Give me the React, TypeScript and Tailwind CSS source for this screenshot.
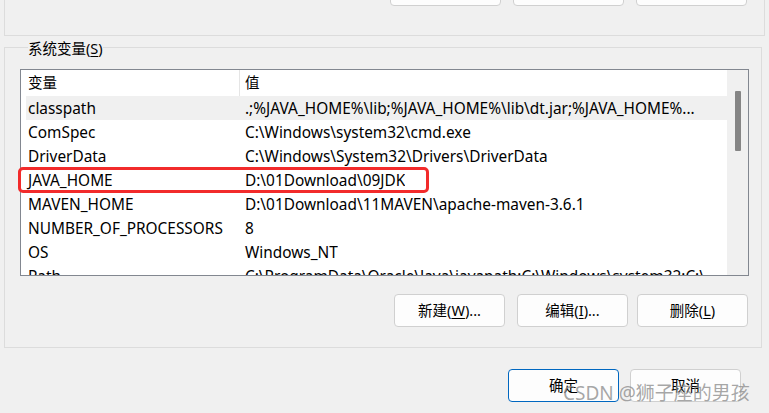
const rows: [string, string][] = [
  ["classpath", ".;%JAVA_HOME%\\lib;%JAVA_HOME%\\lib\\dt.jar;%JAVA_HOME%..."],
  ["ComSpec", "C:\\Windows\\system32\\cmd.exe"],
  ["DriverData", "C:\\Windows\\System32\\Drivers\\DriverData"],
  ["JAVA_HOME", "D:\\01Download\\09JDK"],
  ["MAVEN_HOME", "D:\\01Download\\11MAVEN\\apache-maven-3.6.1"],
  ["NUMBER_OF_PROCESSORS", "8"],
  ["OS", "Windows_NT"],
  ["Path", "C:\\ProgramData\\Oracle\\Java\\javapath;C:\\Windows\\system32;C:\\..."],
];

function WinButton({ children, primary }: { children?: React.ReactNode; primary?: boolean }) {
  return (
    <button
      className={
        primary
          ? "h-[33px] w-[111px] rounded-[4px] border border-[#0067c0] bg-[#fdfdfd] text-[14.5px] text-black"
          : "h-[33px] w-[111px] rounded-[4px] border border-[#d0d0d0] bg-[#fdfdfd] text-[14.5px] text-black"
      }
    >
      {children}
    </button>
  );
}

export default function App() {
  return (
    <div className="relative h-[413px] w-[769px] overflow-hidden bg-[#f0f0f0] font-['Noto_Sans','Noto_Sans_CJK_SC',sans-serif] text-[14.5px] text-black">
      {/* user variables group (cut off at top) */}
      <div className="mx-[4px] flex h-[36px] justify-end gap-[12px] border-x border-b border-[#dcdcdc] pr-[17px]">
        <div className="-mt-[27px] h-[33px] w-[111px] rounded-[4px] border border-[#d0d0d0] bg-[#fdfdfd]" />
        <div className="-mt-[27px] h-[33px] w-[111px] rounded-[4px] border border-[#d0d0d0] bg-[#fdfdfd]" />
        <div className="-mt-[27px] h-[33px] w-[111px] rounded-[4px] border border-[#d0d0d0] bg-[#fdfdfd]" />
      </div>

      <fieldset className="ml-[4px] mr-[7px] border border-[#dcdcdc] pb-[20px] pl-[15px] pr-[12px]">
        <legend className="ml-[8px] pt-[2px] leading-[20px]">
          系统变量(<span className="underline underline-offset-2">S</span>)
        </legend>

        <div className="relative mt-[11px] flex h-[207px] border border-[#828790] bg-white">
          <div className="flex-1 overflow-hidden pl-[5px]">
            <div className="flex h-[26px] items-center">
              <div className="w-[213px] pl-[2px]">变量</div>
              <div className="h-full border-l border-[#e5e5e5]" />
              <div className="pl-[5px]">值</div>
            </div>
            {rows.map(([name, value], i) => (
              <div
                key={name}
                className={
                  i === 0
                    ? "flex h-[24px] items-center bg-[#f0f0f0] pt-[1px] text-[15.4px]"
                    : "flex h-[24px] items-center pt-[1px] text-[15.4px]"
                }
              >
                <div className="w-[213px] shrink-0 whitespace-nowrap pl-[2px]">{name}</div>
                <div className="overflow-hidden whitespace-nowrap pl-[6px]">{value}</div>
              </div>
            ))}
          </div>
          <div className="flex w-[21px] shrink-0 justify-center bg-[#f0f0f0] pt-[21px]">
            <div className="h-[60px] w-[6px] rounded-[1px] bg-[#858585]" />
          </div>

          {/* annotation */}
          <div className="absolute left-[-3px] top-[97px] h-[26px] w-[411px] rounded-[5px] border-[3px] border-[#f22b2b]" />
        </div>

        <div className="mt-[18px] flex justify-end pr-[1px]">
          <WinButton>
            新建(<span className="underline underline-offset-2">W</span>)...
          </WinButton>
          <div className="w-[12px]" />
          <WinButton>
            编辑(<span className="underline underline-offset-2">I</span>)...
          </WinButton>
          <div className="w-[9px]" />
          <WinButton>
            删除(<span className="underline underline-offset-2">L</span>)
          </WinButton>
        </div>
      </fieldset>

      <div className="mt-[21px] flex justify-end gap-[11px] pr-[28px]">
        <WinButton primary>确定</WinButton>
        <WinButton>取消</WinButton>
      </div>

      <div className="pointer-events-none absolute left-[563px] top-[380px] text-[19px] leading-[26px] text-[#8a8a8a]/75">
        CSDN @狮子座的男孩
      </div>
    </div>
  );
}
